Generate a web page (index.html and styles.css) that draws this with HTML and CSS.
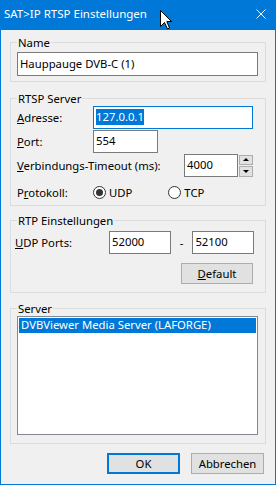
FILE: index.html
```html
<!DOCTYPE html>
<html>
<head>
    <title>SAT&gt;IP RTSP Einstellungen</title>
    <link rel="stylesheet" href="styles.css">
</head>
<body>
    <div class="window">
        <div class="titlebar">
            <span class="title">SAT&gt;IP RTSP Einstellungen</span>
            <svg class="close" width="10" height="10" viewBox="0 0 10 10">
                <path d="M0.5 0.5 L9.5 9.5 M9.5 0.5 L0.5 9.5" stroke="#ffffff" stroke-width="1" fill="none"/>
            </svg>
        </div>
        <div class="client">
            <fieldset class="group group-name">
                <legend>Name</legend>
                <div class="edit edit-name">Hauppauge DVB-C (1)</div>
            </fieldset>

            <fieldset class="group group-rtsp">
                <legend>RTSP Server</legend>
                <div class="row">
                    <span class="label"><u>A</u>dresse:</span>
                    <div class="edit edit-addr focused"><span class="sel">127.0.0.1</span></div>
                </div>
                <div class="row">
                    <span class="label"><u>P</u>ort:</span>
                    <div class="edit edit-port">554</div>
                </div>
                <div class="row">
                    <span class="label label-wide"><u>V</u>erbindungs-Timeout (ms):</span>
                    <div class="edit edit-timeout">4000</div>
                    <div class="spin">
                        <div class="spin-btn"><span class="arrow-up"></span></div>
                        <div class="spin-btn"><span class="arrow-down"></span></div>
                    </div>
                </div>
                <div class="row row-radio">
                    <span class="label">P<u>r</u>otokoll:</span>
                    <span class="radio checked"></span><span class="radio-text">UDP</span>
                    <span class="radio radio-tcp"></span><span class="radio-text">TCP</span>
                </div>
            </fieldset>

            <fieldset class="group group-rtp">
                <legend>RTP Einstellungen</legend>
                <div class="row">
                    <span class="label label-udp"><u>U</u>DP Ports:</span>
                    <div class="edit edit-udp">52000</div>
                    <span class="dash">-</span>
                    <div class="edit edit-udp">52100</div>
                </div>
                <div class="row row-default">
                    <button class="btn btn-default"><u>D</u>efault</button>
                </div>
            </fieldset>

            <fieldset class="group group-server">
                <legend>Server</legend>
                <div class="listbox">
                    <div class="list-item selected">DVBViewer Media Server (LAFORGE)</div>
                </div>
            </fieldset>

            <div class="buttons">
                <button class="btn btn-ok">OK</button>
                <button class="btn">Abbrechen</button>
            </div>
        </div>

        <svg class="cursor" width="14" height="21" viewBox="0 0 14 21">
            <path d="M0.5 0.5 L0.5 16.5 L4.5 12.5 L7.5 19 L9.5 18 L6.8 11.5 L11.5 11.5 Z" fill="#ffffff" stroke="#000000" stroke-width="1"/>
        </svg>
    </div>
</body>
</html>
```

FILE: styles.css
```css
body {
    margin: 0;
    font-family: 'Noto Sans', sans-serif;
    font-size: 11.3px;
    color: #000000;
    background-color: #ffffff;
}

.window {
    position: relative;
    width: 276px;
    height: 485px;
    box-sizing: border-box;
    border: 1px solid #0078d7;
    border-top: 0;
    background-color: #f0f0f0;
    overflow: hidden;
}

.titlebar {
    height: 30px;
    margin: 0 -1px;
    background-color: #0078d7;
    color: #ffffff;
    display: flex;
    align-items: center;
    padding-left: 4px;
    padding-right: 10px;
}

.title {
    flex: 1;
    font-size: 11.5px;
    line-height: 16px;
    margin-top: -2px;
}

.close {
    display: block;
    margin-top: -2px;
}

.client {
    padding: 5px 9px 0 9px;
}

.group {
    margin: 0;
    border: 1px solid #dcdcdc;
    padding: 0 7px 0 6px;
    min-width: 0;
}

.group legend {
    padding: 0 1px;
    line-height: 15px;
}

.group-name {
    padding-top: 2px;
    padding-bottom: 5px;
}

.group-rtsp {
    margin-top: 9px;
    padding-right: 12px;
    padding-bottom: 3px;
}

.group-rtp {
    margin-top: 7px;
    padding-top: 3px;
    padding-right: 11px;
    padding-bottom: 8px;
}

.group-server {
    margin-top: 8px;
    padding-bottom: 8px;
}

.edit {
    height: 23px;
    box-sizing: border-box;
    border: 1px solid #7a7a7a;
    background-color: #ffffff;
    padding: 0 2px;
    line-height: 20px;
    white-space: nowrap;
}

.edit-name {
    height: 24px;
    line-height: 21px;
}

.focused {
    border-color: #0078d7;
}

.sel {
    background-color: #0078d7;
    color: #ffffff;
    padding-bottom: 1px;
}

.row {
    display: flex;
    align-items: center;
    height: 23px;
    margin-top: 1px;
}

.row:first-of-type {
    margin-top: 0;
}

.label {
    width: 76px;
    flex: none;
}

.label-wide {
    width: auto;
    flex: 1;
}

.edit-addr {
    flex: 1;
}

.edit-port {
    width: 65px;
}

.edit-timeout {
    width: 54px;
}

.spin {
    width: 14px;
    height: 22px;
    margin-left: 1px;
    display: flex;
    flex-direction: column;
    gap: 1px;
}

.spin-btn {
    flex: 1;
    box-sizing: border-box;
    border: 1px solid #adadad;
    background-color: #e1e1e1;
    display: flex;
    align-items: center;
    justify-content: center;
}

.arrow-up {
    border-left: 3px solid transparent;
    border-right: 3px solid transparent;
    border-bottom: 3px solid #000000;
}

.arrow-down {
    border-left: 3px solid transparent;
    border-right: 3px solid transparent;
    border-top: 3px solid #000000;
}

.row-radio {
    height: 20px;
    margin-top: 5px;
}

.radio {
    width: 13px;
    height: 13px;
    box-sizing: border-box;
    border: 1px solid #333333;
    border-radius: 50%;
    background-color: #ffffff;
    flex: none;
    display: flex;
    align-items: center;
    justify-content: center;
}

.radio.checked::after {
    content: "";
    width: 7px;
    height: 7px;
    border-radius: 50%;
    background-color: #333333;
}

.radio-text {
    margin-left: 3px;
}

.radio-tcp {
    margin-left: 36px;
}

.label-udp {
    width: 94px;
    margin-left: -2px;
}

.edit-udp {
    width: 62px;
}

.dash {
    width: 22px;
    text-align: center;
}

.row-default {
    justify-content: flex-end;
    height: 21px;
    margin-top: 9px;
}

.btn {
    font-family: 'Noto Sans', sans-serif;
    font-size: 11.3px;
    color: #000000;
    width: 73px;
    height: 21px;
    box-sizing: border-box;
    border: 1px solid #adadad;
    background-color: #e1e1e1;
    padding: 0;
    margin: 0;
    line-height: 17px;
}

.btn-default {
    width: 72px;
    margin-right: 1px;
}

.btn-ok {
    border: 2px solid #0078d7;
}

.listbox {
    height: 119px;
    box-sizing: border-box;
    border: 1px solid #828790;
    background-color: #ffffff;
    padding: 1px;
}

.list-item {
    height: 15px;
    line-height: 14px;
    padding-left: 2px;
    white-space: nowrap;
}

.selected {
    background-color: #0078d7;
    color: #ffffff;
}

.buttons {
    display: flex;
    justify-content: flex-end;
    gap: 11px;
    margin-top: 9px;
    margin-right: 2px;
}

.cursor {
    position: absolute;
    left: 159px;
    top: 10px;
}
```
